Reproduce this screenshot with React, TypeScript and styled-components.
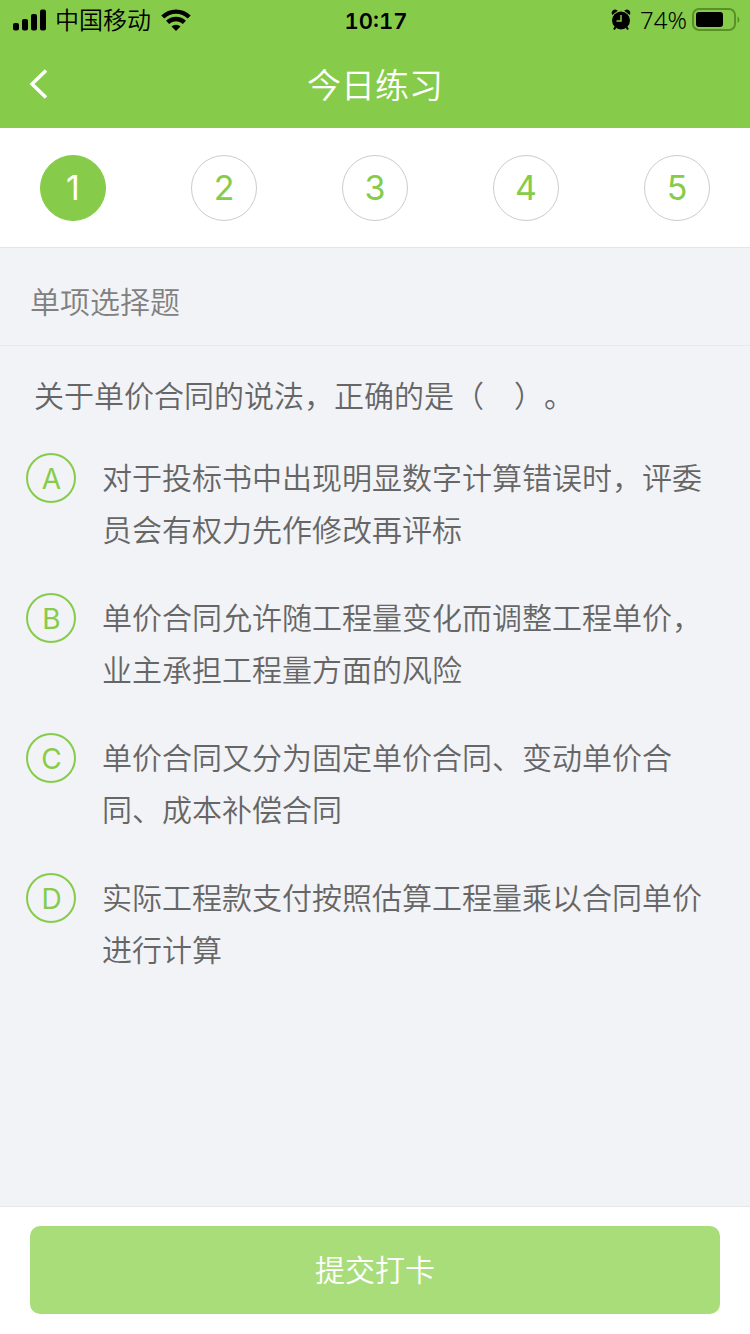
import React, { useState } from "react";
import styled, { createGlobalStyle } from "styled-components";

const green = "#86cc4a";

const GlobalStyle = createGlobalStyle`
  *, *::before, *::after { box-sizing: border-box; }
  body {
    margin: 0;
    background: #f2f3f6;
    font-family: Inter, "Noto Sans CJK SC", sans-serif;
    font-weight: 350;
    text-spacing-trim: space-all;
    color: #666;
  }
  button, input { font: inherit; }
`;

const Page = styled.div`
  min-height: 100vh;
  display: flex;
  flex-direction: column;
`;

const StatusBar = styled.div`
  display: grid;
  grid-template-columns: 1fr auto 1fr;
  align-items: center;
  height: 40px;
  padding: 0 10px 0 12px;
  background: ${green};
  color: #000;
  font-size: 24px;
  line-height: 40px;
`;

const StatusGroup = styled.div<{ $end?: boolean }>`
  display: flex;
  align-items: center;
  justify-content: ${(p) => (p.$end ? "flex-end" : "flex-start")};
  gap: ${(p) => (p.$end ? 5 : 9)}px;
`;

const Carrier = styled.span`
  padding-top: 2px;
  line-height: 38px;
`;

const Clock = styled.time`
  padding-top: 2px;
  font-size: 22px;
  line-height: 38px;
  font-weight: 600;
  font-variant-numeric: tabular-nums;
`;

const Percent = styled.span`
  margin-left: 4px;
  font-family: "Noto Sans", sans-serif;
  font-size: 24px;
  font-weight: 350;
`;

const TitleBar = styled.header`
  display: grid;
  grid-template-columns: 80px 1fr 80px;
  align-items: center;
  height: 88px;
  background: ${green};
  color: #fff;
`;

const BackButton = styled.button`
  display: flex;
  align-items: center;
  height: 88px;
  padding: 0 0 0 28px;
  border: 0;
  background: none;
  color: inherit;
`;

const Title = styled.h1`
  margin: 0;
  padding-top: 4px;
  text-align: center;
  font-size: 34px;
  line-height: 48px;
  font-weight: 350;
`;

const Steps = styled.nav`
  display: flex;
  justify-content: space-between;
  align-items: center;
  height: 120px;
  padding: 0 40px;
  background: #fff;
  border-bottom: 1px solid #e6e6e6;
`;

const Step = styled.button<{ $active: boolean }>`
  width: 66px;
  height: 66px;
  padding: 0;
  border-radius: 50%;
  border: 1px solid ${(p) => (p.$active ? green : "#ccc")};
  background: ${(p) => (p.$active ? green : "#fff")};
  color: ${(p) => (p.$active ? "#fff" : green)};
  font-size: 34px;
  font-weight: 400;
  line-height: 64px;
`;

const SectionTitle = styled.h2`
  margin: 0;
  padding: 30px 30px 19px;
  border-bottom: 1px solid #e8e9eb;
  color: #808080;
  font-size: 30px;
  line-height: 48px;
  font-weight: 350;
`;

const Quiz = styled.fieldset`
  flex: 1;
  min-width: 0;
  margin: 0;
  padding: 0 30px 36px 26px;
  border: 0;
`;

const Question = styled.legend`
  padding: 24px 8px 30px;
  font-size: 30px;
  line-height: 52px;
`;

const Options = styled.div`
  display: flex;
  flex-direction: column;
  gap: 36px;
`;

const Badge = styled.span`
  flex: none;
  display: flex;
  align-items: center;
  justify-content: center;
  width: 50px;
  height: 50px;
  margin-top: 1px;
  padding: 2px 0 0 1px;
  border: 2px solid ${green};
  border-radius: 50%;
  color: ${green};
  font-size: 28px;
  font-weight: 400;
  line-height: 44px;
`;

const Radio = styled.input`
  position: absolute;
  opacity: 0;
  width: 50px;
  height: 50px;
  margin: 0;

  &:checked + ${Badge} {
    background: ${green};
    color: #fff;
  }
`;

const Option = styled.label`
  position: relative;
  display: flex;
  align-items: flex-start;
  gap: 26px;
  font-size: 30px;
  line-height: 52px;
  cursor: pointer;
`;

const Footer = styled.footer`
  padding: 19px 30px 20px;
  background: #fff;
  border-top: 1px solid #e6e7e9;
`;

const Submit = styled.button`
  display: block;
  width: 100%;
  height: 88px;
  padding: 0;
  border: 0;
  border-radius: 10px;
  background: #a9dd7a;
  color: #fff;
  font-size: 30px;
  line-height: 88px;
`;

const Signal = () => (
  <svg width="34" height="22" viewBox="0 0 34 22" aria-hidden="true">
    <rect x="1" y="14" width="6" height="7.5" rx="2" />
    <rect x="10" y="10" width="6" height="11.5" rx="2" />
    <rect x="19" y="5" width="6" height="16.5" rx="2" />
    <rect x="28" y="0.5" width="6" height="21" rx="2" />
  </svg>
);

const Wifi = () => (
  <svg width="32" height="24" viewBox="0 0 32 24" aria-hidden="true">
    <g fill="none" stroke="#000" strokeWidth="4.4">
      <path d="M2.8 9a18.8 18.8 0 0 1 26.4 0" />
      <path d="M7.6 14.4a12 12 0 0 1 16.8 0" />
    </g>
    <path d="M16 23l-4.500-4.400a6.500 6.500 0 0 1 9 0z" />
  </svg>
);

const Alarm = () => (
  <svg width="20" height="22" viewBox="0 0 20 22" aria-hidden="true">
    <circle cx="10" cy="11.5" r="9" />
    <path
      d="M1.6 4.800A2.600 2.600 0 0 1 5.600 1.800zM14.400 1.800A2.600 2.600 0 0 1 18.400 4.800z"
      stroke="#000"
      strokeWidth="1.400"
    />
    <path d="M4.500 18l-1.500 2.500M15.500 18l1.500 2.500" stroke="#000" strokeWidth="2" />
    <path d="M10 6v6H5.500" fill="none" stroke={green} strokeWidth="1.500" />
  </svg>
);

const Battery = () => (
  <svg width="48" height="24" viewBox="0 0 48 24" aria-hidden="true">
    <rect x="1" y="1" width="42" height="21" rx="6" fill="none" stroke="#5a9028" strokeWidth="2" />
    <rect x="4" y="4" width="27" height="15" rx="3" />
    <path d="M45.5 8.500c2.500 1 2.500 5.500 0 6.500z" fill="#5a9028" />
  </svg>
);

const BackIcon = () => (
  <svg width="22" height="32" viewBox="0 0 22 32" aria-hidden="true">
    <path d="M18 2.500L4 16l14 13.500" fill="none" stroke="currentColor" strokeWidth="3.500" />
  </svg>
);

const options = [
  { key: "A", text: "对于投标书中出现明显数字计算错误时，评委员会有权力先作修改再评标" },
  { key: "B", text: "单价合同允许随工程量变化而调整工程单价，业主承担工程量方面的风险" },
  { key: "C", text: "单价合同又分为固定单价合同、变动单价合同、成本补偿合同" },
  { key: "D", text: "实际工程款支付按照估算工程量乘以合同单价进行计算" },
];

export default function App() {
  const [step, setStep] = useState(1);
  return (
    <Page lang="zh-CN">
      <GlobalStyle />
      <StatusBar>
        <StatusGroup>
          <Signal />
          <Carrier>中国移动</Carrier>
          <Wifi />
        </StatusGroup>
        <Clock>10:17</Clock>
        <StatusGroup $end>
          <Alarm />
          <Percent>74%</Percent>
          <Battery />
        </StatusGroup>
      </StatusBar>
      <TitleBar>
        <BackButton type="button" aria-label="返回">
          <BackIcon />
        </BackButton>
        <Title>今日练习</Title>
      </TitleBar>
      <Steps>
        {[1, 2, 3, 4, 5].map((n) => (
          <Step key={n} type="button" $active={n === step} onClick={() => setStep(n)}>
            {n}
          </Step>
        ))}
      </Steps>
      <SectionTitle>单项选择题</SectionTitle>
      <Quiz>
        <Question>关于单价合同的说法，正确的是（{"\u3000"}）。</Question>
        <Options>
          {options.map((o) => (
            <Option key={o.key}>
              <Radio type="radio" name="answer" value={o.key} />
              <Badge>{o.key}</Badge>
              <span>{o.text}</span>
            </Option>
          ))}
        </Options>
      </Quiz>
      <Footer>
        <Submit type="button">提交打卡</Submit>
      </Footer>
    </Page>
  );
}
